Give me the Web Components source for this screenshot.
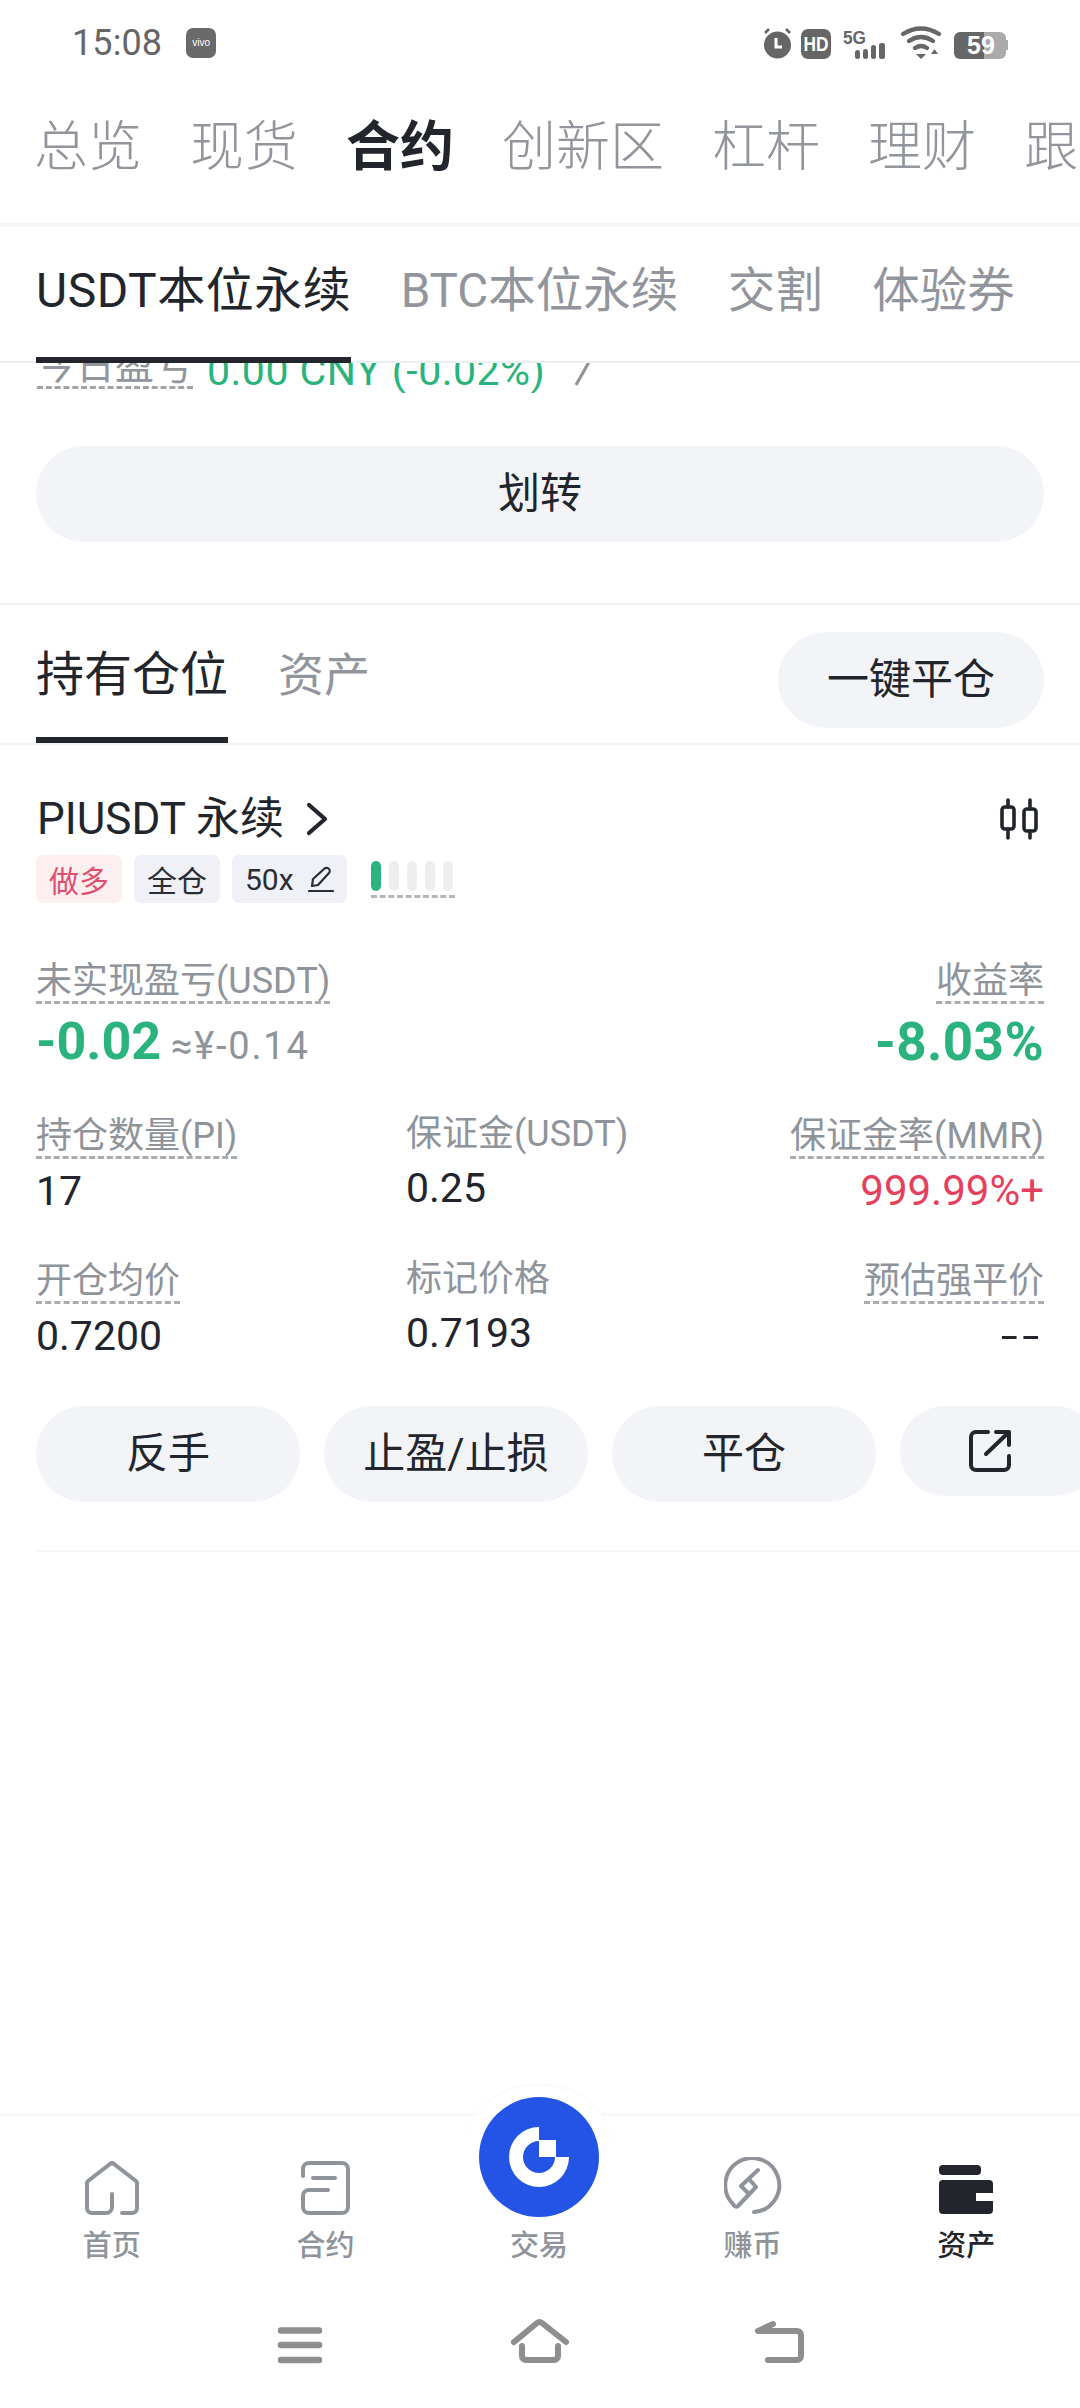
<!DOCTYPE html>
<html lang="zh-CN"><head><meta charset="utf-8"><title>合约</title>
<style>
html,body{margin:0;padding:0;background:#fff}
body{width:1080px;height:2408px;overflow:hidden;font-family:Roboto,"Noto Sans CJK SC",sans-serif;color:#22252c}
</style></head><body>
<app-shell>
  <status-bar></status-bar>
  <top-tabs></top-tabs>
  <sub-tabs></sub-tabs>
  <pnl-peek></pnl-peek>
  <pill-button wide>划转</pill-button>
  <section-head></section-head>
  <position-card></position-card>
  <bottom-nav></bottom-nav>
  <gesture-bar></gesture-bar>
</app-shell>
<script>
const FONT='Roboto,"Noto Sans CJK SC",sans-serif';
function def(name,html,init){
  customElements.define(name,class extends HTMLElement{
    constructor(){super();this.attachShadow({mode:'open'}).innerHTML=html;}
    connectedCallback(){init&&init(this);}
  });
}
def('app-shell',`<style>:host{display:flex;flex-direction:column;width:1080px;height:2408px;overflow:hidden;background:#fff;font-family:${FONT}}</style><slot></slot>`);

def('status-bar',`<style>
:host{display:flex;align-items:center;height:86px;padding:0 72px 0 72px;box-sizing:border-box;color:#666}
.t{font-size:36px;line-height:42px;margin-right:24px;letter-spacing:.1px}
.v{width:30px;height:30px;border-radius:7px;background:#6a6a6a;color:#fff;font-size:10px;line-height:30px;text-align:center;font-family:"Liberation Sans",sans-serif}
.sp{flex:1}
.r{display:flex;align-items:center}
svg{display:block}
text{font-family:"Liberation Sans",sans-serif;font-weight:700}
</style>
<span class="t">15:08</span><span class="v">vivo</span><span class="sp"></span>
<span class="r">
<svg width="245" height="34" viewBox="0 0 245 34" fill="#666">
  <circle cx="14.5" cy="19" r="13.5"/><path d="M13 12v9h6" fill="none" stroke="#fff" stroke-width="3"/>
  <path d="M2 7 6 3M27 7l-4-4" stroke="#666" stroke-width="2.6" fill="none"/>
  <rect x="38" y="3" width="30" height="30" rx="7"/>
  <text x="53" y="25" font-size="20" fill="#fff" text-anchor="middle" textLength="25" lengthAdjust="spacingAndGlyphs">HD</text>
  <text x="80" y="18" font-size="19" textLength="23" lengthAdjust="spacingAndGlyphs">5G</text>
  <rect x="92" y="24" width="5" height="9" rx="2.5"/><rect x="100" y="23" width="5" height="10" rx="2.5"/><rect x="108" y="19" width="5" height="14" rx="2.5"/><rect x="116" y="17" width="6" height="16" rx="2.5"/>
  <path d="M140 8q18-11 36 0M146 15q12-8 24 0M152 22q6-4 12 0" fill="none" stroke="#666" stroke-width="4.2" stroke-linecap="round"/>
  <path d="M153 28h10l-5 5zM168 28h7l-3.500-5z"/>
  <path d="M191 12a6 6 0 0 1 6-6h24v27h-24a6 6 0 0 1-6-6z"/>
  <path d="M221 6h16a6 6 0 0 1 6 6v15a6 6 0 0 1-6 6h-16z" fill="#aaa"/><rect x="243" y="14" width="2" height="10" fill="#aaa"/>
  <text x="218" y="28" font-size="25" fill="#fff" text-anchor="middle">59</text>
</svg></span>`);

def('top-tabs',`<style>
:host{display:flex;height:141px;flex:none;padding:0 0 0 34px;box-sizing:border-box;gap:48px;align-items:center;font-size:54px;color:#92969c;border-bottom:4px solid #f6f7f8;white-space:nowrap;overflow:hidden;font-family:"Noto Sans CJK SC",sans-serif;font-weight:300}
span{line-height:64px;margin-bottom:24px}.on{color:#22252c;font-weight:700}
</style><span>总览</span><span>现货</span><span class="on">合约</span><span>创新区</span><span>杠杆</span><span>理财</span><span>跟</span>`);

def('sub-tabs',`<style>
:host{display:flex;height:136px;flex:none;padding:0 0 0 36px;box-sizing:border-box;gap:49.5px;font-size:47.5px;color:#92969c;border-bottom:2px solid #eeeff1;white-space:nowrap;font-family:${FONT}}
span{height:136px;line-height:128px;box-sizing:border-box;font-weight:400}
.on{color:#22252c;border-bottom:6px solid #22252c;font-size:48px;letter-spacing:.5px}
</style><span class="on">USDT本位永续</span><span>BTC本位永续</span><span>交割</span><span>体验券</span>`);

def('pnl-peek',`<style>
:host{display:flex;flex:none;height:30px;overflow:hidden;padding-left:37px;align-items:flex-end;white-space:nowrap;color:#92969c;gap:14px}
.l{border-bottom:3px dashed #a0a3a8;line-height:40px;height:40px;flex:none;font-size:39px;margin-bottom:4px}
.g{color:#2ab37c;line-height:43px;height:43px;font-size:41px;letter-spacing:.5px}
svg{margin:0 0 7px 14px;flex:none}
</style><span class="l">今日盈亏</span><span class="g">0.00 CNY (-0.02%)</span><svg width="18" height="30" viewBox="0 0 18 30" fill="none" stroke="#92969c" stroke-width="3.200"><path d="M16 6 3 29"/></svg>`);

def('pill-button',`<style>
:host{display:flex;align-items:center;justify-content:center;flex:none;height:96px;border-radius:48px;background:#f2f4f7;color:#22252c;font-size:42px;line-height:96px;box-sizing:border-box}
:host([wide]){margin:53px 36px 61px}
</style><slot></slot>`);

def('section-head',`<style>
:host{display:flex;flex:none;align-items:flex-start;height:142px;box-sizing:border-box;border-top:2px solid #f2f3f5;border-bottom:2px solid #f2f3f5;padding:0 36px;font-size:48px;position:relative}
.a{height:138px;line-height:140px;box-sizing:border-box;border-bottom:6px solid #22252c;color:#22252c;width:192px;white-space:nowrap;margin-right:50px}
.b{line-height:140px;color:#92969c;font-size:46px}
.s{flex:1}
pill-button{width:266px;margin-top:27px}
</style><span class="a">持有仓位</span><span class="b">资产</span><span class="s"></span><pill-button>一键平仓</pill-button>`);

def('x-tag',`<style>
:host{display:inline-flex;align-items:center;justify-content:center;height:48px;box-sizing:border-box;border-radius:7px;background:#eff1f6;color:#2a2d36;font-size:30px;padding:0 13px;gap:14px;white-space:nowrap}
:host([red]){background:#fdeef0;color:#e0506e}
</style><slot></slot>`);

def('x-metric',`<style>
:host{display:flex;flex-direction:column;align-items:flex-start;font-size:36px;color:#8f949b}
:host([end]){align-items:flex-end}
.l{line-height:34px;white-space:nowrap;padding-top:2px}
:host([dash]) .l{padding-top:2px;padding-bottom:3px;border-bottom:3px dashed #a9acb1}
:host(:not([dash])) .l{padding-top:0;padding-bottom:0}
.v{color:#22252c;font-size:41px;line-height:46px;margin-top:9px;white-space:nowrap}
:host(:not([dash])) .v{margin-top:14px}
:host([red]) .v{color:#e6405f;font-size:42px}
</style><span class="l"><slot name="l"></slot></span><span class="v"><slot></slot></span>`);

def('position-card',`<style>
:host{display:block;flex:none;margin:0;padding:0 0 0 36px;box-sizing:border-box;height:806px;font-family:${FONT}}
.title{display:flex;align-items:center;justify-content:space-between;height:50px;margin:49px 42px 0 1px;}
.name{display:flex;align-items:center;font-size:44px;line-height:50px;color:#22252c}
.name svg{margin-left:22px}
.tags{display:flex;gap:12px;margin-top:11px;align-items:center;height:48px}
.bars{display:flex;gap:8px;margin-left:12px;padding-bottom:9px;position:relative;align-items:flex-start;height:36px;box-sizing:border-box}
.bars i{display:block;width:10px;height:30px;border-radius:5px;background:#eceef0}
.bars i:first-child{background:#2ab37c}
.bars b{position:absolute;left:0;right:-2px;top:34px;height:0;border-top:3px dashed #b4b7bb}
.pnl{display:flex;justify-content:space-between;margin:60px 36px 0 0;color:#8f949b;font-size:36px}
.pc{display:flex;flex-direction:column}
.pc.e{align-items:flex-end}
.dash{line-height:36px;border-bottom:3px dashed #a9acb1;padding-bottom:2px;white-space:nowrap}
.big{font-size:52px;font-weight:700;color:#2ab37c;line-height:56px;margin-top:10px;white-space:nowrap}
.big small{font-size:38px;font-weight:400;color:#8f949b;margin-left:10px;letter-spacing:1.8px}
.grid{display:grid;grid-template-columns:370px 1fr 1fr;row-gap:48px;margin:43px 36px 0 0;}
.grid x-metric:nth-child(3n){justify-self:end}
.dd{display:inline-block;letter-spacing:3px;transform:scaleX(1.5);transform-origin:right center}
.acts{display:flex;gap:24px;margin-top:47px;}
.acts pill-button{width:264px}
.acts pill-button.ic{width:200px;height:90px;flex:none;margin-right:-60px;align-self:flex-start}
.rule{height:2px;background:#f5f6f7;margin-top:48px}
</style>
<div class="title"><span class="name">PIUSDT 永续<svg width="22" height="34" viewBox="0 0 22 34" fill="none" stroke="#22252c" stroke-width="4.200" stroke-linecap="round" stroke-linejoin="round"><path d="M3 3 19 17 3 31"/></svg></span>
<svg width="38" height="42" viewBox="0 0 38 42" fill="none" stroke="#22252c" stroke-width="3.600" stroke-linecap="round"><rect x="2" y="9" width="12" height="22" rx="3"/><rect x="24" y="11" width="12" height="22" rx="3"/><path d="M8 2v7M8 31v9M30 2v9M30 33v7"/></svg></div>
<div class="tags"><x-tag red>做多</x-tag><x-tag>全仓</x-tag><x-tag>50x<svg width="26" height="26" viewBox="0 0 26 26" fill="none" stroke="#2a2d36" stroke-width="2.200" stroke-linecap="round" stroke-linejoin="round"><path d="M1 25H25M4 20 5 13 16 3a3 3 0 0 1 5 4L10 19z"/></svg></x-tag>
<span class="bars"><i></i><i></i><i></i><i></i><i></i><b></b></span></div>
<div class="pnl"><div class="pc"><span class="dash">未实现盈亏(USDT)</span><span class="big">-0.02<small>≈¥-0.14</small></span></div>
<div class="pc e"><span class="dash">收益率</span><span class="big" style="font-size:53px;letter-spacing:.4px">-8.03%</span></div></div>
<div class="grid">
<x-metric dash><span slot="l">持仓数量(PI)</span>17</x-metric>
<x-metric><span slot="l">保证金(USDT)</span>0.25</x-metric>
<x-metric dash end red><span slot="l">保证金率(MMR)</span>999.99%+</x-metric>
<x-metric dash><span slot="l">开仓均价</span>0.7200</x-metric>
<x-metric><span slot="l">标记价格</span>0.7193</x-metric>
<x-metric dash end><span slot="l">预估强平价</span><span class="dd">--</span></x-metric>
</div>
<div class="acts"><pill-button>反手</pill-button><pill-button>止盈/止损</pill-button><pill-button>平仓</pill-button>
<pill-button class="ic"><svg width="44" height="44" viewBox="0 0 44 44" fill="none" stroke="#22252c" stroke-width="4" stroke-linecap="round" stroke-linejoin="round" style="margin-right:20px"><path d="M20 3H8a5 5 0 0 0-5 5v28a5 5 0 0 0 5 5h28a5 5 0 0 0 5-5V27M18 25 40 4M28 3H41V16"/></svg></pill-button></div>
<div class="rule"></div>`);

def('nav-item',`<style>
:host{display:flex;flex-direction:column;align-items:center;width:213.6px;font-size:29px;color:#8f949b;font-weight:500}
:host([on]){color:#22252c}
.i{height:62px;display:flex;align-items:flex-end;justify-content:center}
.t{line-height:36px;margin-top:13px}
</style><span class="i"><slot></slot></span><span class="t"><slot name="t"></slot></span>`);

def('bottom-nav',`<style>
:host{display:block;position:absolute;left:0;top:2113px;width:1080px;height:200px;border-top:3px solid #f8f9fa;box-sizing:border-box;}
.row{display:flex;padding:37px 5px 0}
.bump{position:absolute;left:462px;top:-30px;width:154px;height:72px;background:#fff;border-radius:77px 77px 0 0;box-shadow:0 -2px 0 #f9fafa}
.fab{position:absolute;left:479px;top:-19px;width:120px;height:120px;border-radius:50%;background:#2454e6;display:flex;align-items:center;justify-content:center}
svg{display:block}
</style>
<div class="bump"></div><div class="fab"><svg width="60" height="60" viewBox="-30 -30 60 60" fill="#fff"><path d="M0-30A30 30 0 1 0 30 0H16A16 16 0 1 1 0-16Z"/><rect x="0" y="-17" width="17" height="17"/></svg></div>
<div class="row">
<nav-item><svg width="54" height="54" viewBox="0 0 54 54" fill="none" stroke="#8f949b" stroke-width="4" stroke-linecap="round" stroke-linejoin="round"><path d="M27 33V46a6 6 0 0 1-6 6H7a5 5 0 0 1-5-5V22a3 3 0 0 1 1-2L25 3a3 3 0 0 1 4 0L51 20a3 3 0 0 1 1 2V47a5 5 0 0 1-5 5H37"/></svg><span slot="t">首页</span></nav-item>
<nav-item><svg width="49" height="54" viewBox="0 0 49 54" fill="none" stroke="#8f949b" stroke-width="4" stroke-linecap="round" stroke-linejoin="round"><path d="M2 15V8a6 6 0 0 1 6-6H41a6 6 0 0 1 6 6V46a6 6 0 0 1-6 6H8a6 6 0 0 1-6-6V35a6 6 0 0 1 6-6H27M12 17H34"/></svg><span slot="t">合约</span></nav-item>
<nav-item><span style="display:block;width:56px;height:56px"></span><span slot="t">交易</span></nav-item>
<nav-item><svg width="58" height="58" viewBox="0 0 58 58" fill="none" stroke="#8f949b" stroke-width="4" stroke-linecap="round" stroke-linejoin="round"><path d="M30 55A27 27 0 1 0 9 47Q11 51 14 49L32 30 25 22M34 13 17 29 25 37"/></svg><span slot="t">赚币</span></nav-item>
<nav-item on><svg width="54" height="50" viewBox="0 0 54 50"><rect x="0" y="0" width="42" height="10" rx="4" fill="#22252c"/><path d="M4 15H50a4 4 0 0 1 4 4v9H37v8H54v9a4 4 0 0 1-4 4H4a4 4 0 0 1-4-4V19a4 4 0 0 1 4-4z" fill="#22252c"/></svg><span slot="t">资产</span></nav-item>
</div>`);

def('gesture-bar',`<style>
:host{display:block;position:absolute;left:0;top:2318px;width:1080px;height:50px}
svg{display:block}
</style>
<svg width="1080" height="50" viewBox="0 0 1080 50" fill="none" stroke="#8e8e8e" stroke-linecap="round" stroke-linejoin="round">
<path d="M281 12.500H319M281 27H319M281 42H319" stroke-width="6.500"/>
<path d="M514 24 537 5a4 4 0 0 1 5 0L566 24M522 28V38a4 4 0 0 0 4 4H554a4 4 0 0 0 4-4V28" stroke-width="6"/>
<path d="M773 6 758 13H797a4 4 0 0 1 4 4V38a4 4 0 0 1-4 4H768" stroke-width="6"/>
</svg>`);
</script>
</body></html>
